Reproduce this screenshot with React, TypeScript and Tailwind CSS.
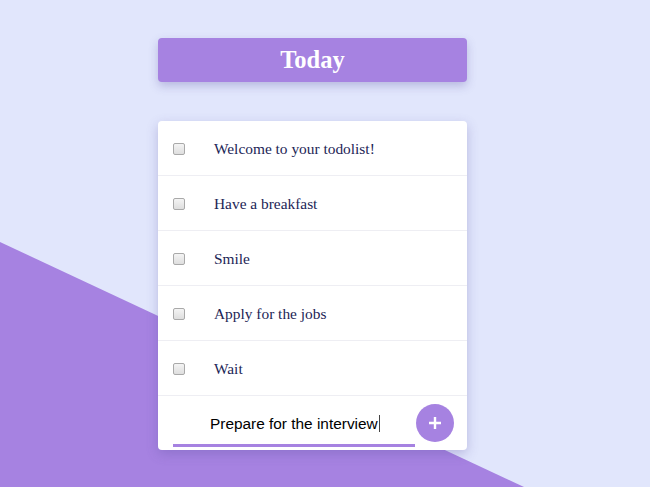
import { useState } from 'react';

const initialTodos = [
  'Welcome to your todolist!',
  'Have a breakfast',
  'Smile',
  'Apply for the jobs',
  'Wait',
];

export default function App() {
  const [todos] = useState(initialTodos);
  const draft = 'Prepare for the interview';

  return (
    <div className="relative h-[487px] w-[650px] overflow-hidden bg-[#e1e6fc]">
      {/* Diagonal backdrop */}
      <div className="absolute inset-0 bg-[#a682e1] [clip-path:polygon(0_242px,524px_487px,0_487px)]" />

      <div className="relative ml-[158px] w-[309px] pt-[38px]">
        {/* Header */}
        <div className="flex h-[44px] items-center justify-center rounded-[4px] bg-[#a682e1] shadow-[0_4px_10px_rgba(90,80,160,0.3)]">
          <h1 className="font-['Liberation_Serif',serif] text-[24.5px] font-bold text-white">Today</h1>
        </div>

        {/* List */}
        <div className="mt-[39px] rounded-[4px] bg-white shadow-[0_4px_12px_rgba(90,80,160,0.3)]">
          {todos.map((todo, index) => (
            <div key={index} className="flex h-[55px] items-center border-b border-[#eeeef3]">
              <span className="ml-[15px] mt-[1px] h-[12px] w-[12px] shrink-0 rounded-[2px] border border-[#a9a9a9] bg-gradient-to-b from-[#f4f4f4] to-[#dedede]" />
              <span className="ml-[29px] mt-[2px] font-['Liberation_Serif',serif] text-[15.4px] text-[#1c2556]">{todo}</span>
            </div>
          ))}

          {/* New todo */}
          <div className="flex h-[54px] items-center pr-[13px]">
            <div className="ml-[15px] flex h-[40px] flex-1 items-center border-b-[3px] border-[#a682e1] mt-[8px] mr-[1px]">
              <div className="flex items-center pl-[37px] pb-[4px]">
                <span className="font-['Liberation_Sans',sans-serif] text-[15.4px] text-black">{draft}</span>
                <span className="ml-[1px] h-[17px] w-px bg-[#444]" />
              </div>
            </div>
            <button className="flex h-[38px] w-[38px] shrink-0 items-center justify-center rounded-full bg-[#a682e1]">
              <svg width="14" height="14" viewBox="0 0 14 14">
                <path d="M7 1v12M1 7h12" stroke="white" strokeWidth="2.4" />
              </svg>
            </button>
          </div>
        </div>
      </div>
    </div>
  );
}
